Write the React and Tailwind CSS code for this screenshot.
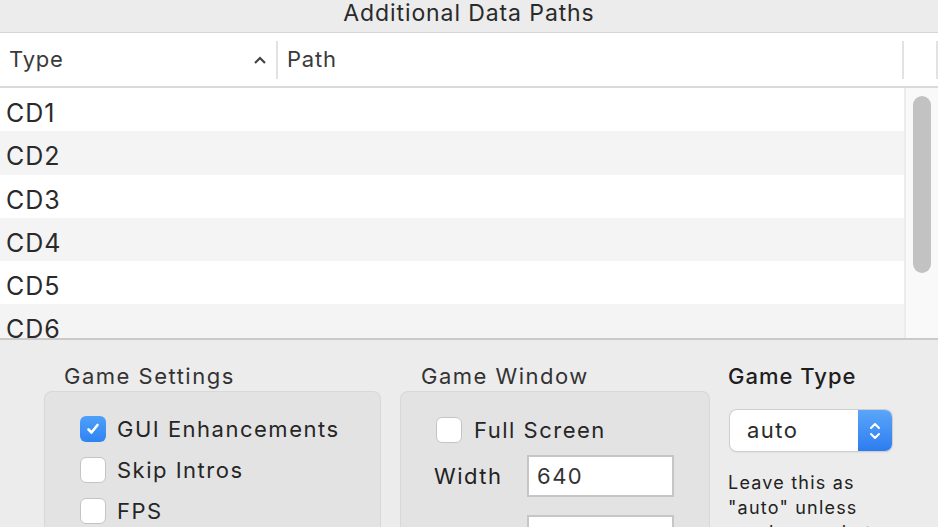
import React from "react";

function Check({ checked }) {
  if (checked) {
    return (
      <div className="w-[26px] h-[26px] rounded-[6px] bg-gradient-to-b from-[#4ea0f8] to-[#2f83f2] flex items-center justify-center shrink-0">
        <svg width="16" height="16" viewBox="0 0 16 16">
          <path d="M3.5 8.5 L6.5 11.5 L12.5 4" fill="none" stroke="white" strokeWidth="2.6" strokeLinecap="round" strokeLinejoin="round" />
        </svg>
      </div>
    );
  }
  return <div className="w-[26px] h-[26px] rounded-[6px] bg-white border border-[#c4c4c4] shrink-0" />;
}

export default function App() {
  const rows = ["CD1", "CD2", "CD3", "CD4", "CD5", "CD6"];
  return (
    <div className="w-[938px] h-[527px] overflow-hidden bg-[#ececec] text-[#262626] font-[Inter,sans-serif] flex flex-col">
      <div className="h-[32px] shrink-0 flex items-center justify-center pb-[5px] text-[23px] tracking-[0.9px] text-[#2a2a2a]">
        Additional Data Paths
      </div>
      <div className="bg-white border-t border-[#d6d6d6] flex flex-col shrink-0">
        <div className="h-[55px] flex items-center border-b-2 border-[#dadada] text-[22px] tracking-[0.8px] text-[#3a3a3a]">
          <div className="w-[276px] h-full flex items-center justify-between pl-[9px] pr-[9px]">
            <span>Type</span>
            <svg width="14" height="10" viewBox="0 0 14 10">
              <path d="M2 8 L7 3 L12 8" fill="none" stroke="#444" strokeWidth="2.2" />
            </svg>
          </div>
          <div className="w-[2px] h-[38px] bg-[#e2e2e2]" />
          <div className="flex-1 pl-[9px]">Path</div>
          <div className="w-[2px] h-[38px] bg-[#e2e2e2]" />
          <div className="w-[32px]" />
          <div className="w-[2px] h-[38px] bg-[#e2e2e2]" />
        </div>
        <div className="h-[252px] flex border-b-2 border-[#cacaca]">
          <div className="flex-1 flex flex-col overflow-hidden">
            {rows.map((r, i) => (
              <div
                key={r}
                className={`h-[43.3px] shrink-0 flex items-center pl-[6px] pt-[8px] text-[25px] tracking-[1px] text-[#2a2a2a] ${i % 2 === 1 ? "bg-[#f4f4f5]" : "bg-white"}`}
              >
                {r}
              </div>
            ))}
          </div>
          <div className="w-[34px] bg-[#f9f9f9] border-l-2 border-[#ececec] pt-[8px] flex justify-center">
            <div className="w-[18px] h-[177px] rounded-full bg-[#c2c2c2]" />
          </div>
        </div>
      </div>
      <div className="flex-1 flex pl-[44px] pt-[22px] text-[22px] tracking-[1.5px]">
        <div className="w-[337px] flex flex-col">
          <div className="pl-[20px] h-[28px] leading-[28px] text-[#333]">Game Settings</div>
          <div className="mt-[1px] flex-1 rounded-t-[8px] bg-[#e3e3e3] border border-[#d8d8d8] border-b-0 pl-[35px] pt-[24px] flex flex-col gap-[15px]">
            <div className="flex items-center gap-[11px] h-[26px]">
              <Check checked />
              <span>GUI Enhancements</span>
            </div>
            <div className="flex items-center gap-[11px] h-[26px]">
              <Check />
              <span>Skip Intros</span>
            </div>
            <div className="flex items-center gap-[11px] h-[26px]">
              <Check />
              <span>FPS</span>
            </div>
          </div>
        </div>
        <div className="w-[310px] ml-[19px] flex flex-col">
          <div className="pl-[21px] h-[28px] leading-[28px] text-[#333]">Game Window</div>
          <div className="mt-[1px] flex-1 rounded-t-[8px] bg-[#e3e3e3] border border-[#d8d8d8] border-b-0 pt-[25px] flex flex-col">
            <div className="flex items-center gap-[12px] h-[26px] pl-[35px]">
              <Check />
              <span>Full Screen</span>
            </div>
            <div className="flex items-center mt-[12px] pl-[33px]">
              <span className="w-[93px] text-[#222]">Width</span>
              <div className="w-[147px] h-[42px] bg-white border-2 border-[#c6c6c6] flex items-center pl-[8px] text-[#333]">640</div>
            </div>
            <div className="flex items-center mt-[18px] pl-[33px]">
              <span className="w-[93px]"></span>
              <div className="w-[147px] h-[42px] bg-white border-2 border-[#c6c6c6]" />
            </div>
          </div>
        </div>
        <div className="ml-[18px] flex flex-col">
          <div className="h-[28px] leading-[28px] text-[#1e1e1e] font-medium tracking-[1px]">Game Type</div>
          <div className="mt-[20px] ml-[2px] w-[162px] h-[41px] rounded-[7px] bg-white shadow-[0_0_0_1px_#cfcfcf,0_1px_2px_rgba(0,0,0,0.15)] flex overflow-hidden">
            <div className="flex-1 flex items-center pl-[17px] text-[#2a2a2a]">auto</div>
            <div className="w-[34px] bg-gradient-to-b from-[#5aa6f9] to-[#2d7cf0] flex items-center justify-center">
              <svg width="14" height="22" viewBox="0 0 14 22">
                <path d="M3 8 L7 4 L11 8" fill="none" stroke="white" strokeWidth="2" strokeLinecap="round" strokeLinejoin="round" />
                <path d="M3 14 L7 18 L11 14" fill="none" stroke="white" strokeWidth="2" strokeLinecap="round" strokeLinejoin="round" />
              </svg>
            </div>
          </div>
          <div className="mt-[19px] text-[18px] leading-[25px] tracking-[1.2px] text-[#222]">
            Leave this as<br />"auto" unless<br />you know what
          </div>
        </div>
      </div>
    </div>
  );
}
